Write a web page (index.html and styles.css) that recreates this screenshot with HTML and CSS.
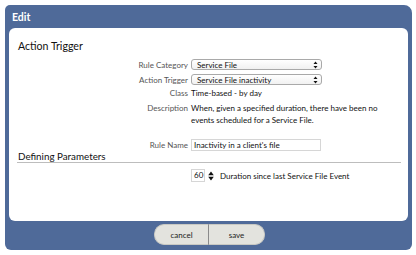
FILE: index.html
```html
<!DOCTYPE html>
<html>
<head>
<meta charset="utf-8">
<link rel="stylesheet" href="styles.css">
</head>
<body>
<div class="dialog">
  <div class="titlebar">Edit</div>
  <div class="card">
    <h2 class="section-title">Action Trigger</h2>
    <div class="form">
      <div class="row row-select first">
        <span class="label">Rule Category</span>
        <div class="select"><span>Service File</span>
          <svg class="updown" width="5" height="8" viewBox="0 0 5 8"><path d="M2.5 0.5 L4.5 3 L0.5 3 Z M2.5 7.5 L4.5 5 L0.5 5 Z" fill="#111"/></svg>
        </div>
      </div>
      <div class="row row-select second">
        <span class="label">Action Trigger</span>
        <div class="select"><span>Service File inactivity</span>
          <svg class="updown" width="5" height="8" viewBox="0 0 5 8"><path d="M2.5 0.5 L4.5 3 L0.5 3 Z M2.5 7.5 L4.5 5 L0.5 5 Z" fill="#111"/></svg>
        </div>
      </div>
      <div class="row row-text class-row">
        <span class="label">Class</span>
        <span class="value">Time-based - by day</span>
      </div>
      <div class="row row-text desc-row">
        <span class="label">Description</span>
        <span class="value desc">When, given a specified duration, there have been no events scheduled for a Service File.</span>
      </div>
      <div class="row row-input name-row">
        <span class="label">Rule Name</span>
        <div class="textbox">Inactivity in a client's file</div>
      </div>
    </div>
    <h2 class="section-title underlined">Defining Parameters</h2>
    <div class="form">
      <div class="row param-row">
        <span class="label"></span>
        <div class="param">
          <div class="numbox">60</div>
          <svg class="spinner" width="6" height="10" viewBox="0 0 6 10"><path d="M3 0.5 L5.8 4.2 L0.2 4.2 Z M3 9.5 L5.8 5.8 L0.2 5.8 Z" fill="#111"/></svg>
          <span class="param-text">Duration since last Service File Event</span>
        </div>
      </div>
    </div>
  </div>
  <div class="footer">
    <div class="btn-group">
      <button class="btn btn-left">cancel</button>
      <button class="btn btn-right">save</button>
    </div>
  </div>
</div>
</body>
</html>
```
FILE: styles.css
```css
html, body {
  margin: 0;
  padding: 0;
  background: #ffffff;
}
body {
  font-family: Lato, "Open Sans", sans-serif;
}
.dialog {
  margin: 5px 0 0 5px;
  width: 407px;
  height: 245px;
  background: #4f6a99;
  border-radius: 5px 8px 6px 6px;
  display: flex;
  flex-direction: column;
}
.titlebar {
  height: 23px;
  line-height: 24px;
  padding-left: 7px;
  color: #ffffff;
  font-weight: bold;
  font-size: 10.5px;
}
.card {
  margin: 0 4px;
  height: 193px;
  box-sizing: border-box;
  background: #ffffff;
  border-radius: 6px;
  padding: 11px 7px 0 9px;
}
.section-title {
  margin: 0;
  font-size: 10.6px;
  font-weight: normal;
  line-height: 14px;
  color: #111;
}
.section-title.underlined {
  margin-top: 0;
  font-size: 9.8px;
  line-height: 11px;
  border-bottom: 1px solid #bdbdbd;
  margin-left: -1px;
  padding-left: 1px;
}
.form {
  display: flex;
  flex-direction: column;
}
.row {
  display: grid;
  grid-template-columns: 170px 1fr;
  column-gap: 3px;
  align-items: center;
  font-size: 8px;
}
.label {
  text-align: right;
  color: #555;
}
.value {
  color: #111;
  line-height: 12px;
}
.desc {
  width: 200px;
}
.row-text {
  align-items: start;
  line-height: 12px;
}
.first { margin-top: 6px; }
.second { margin-top: 4px; }
.class-row { margin-top: 2px; }
.desc-row { margin-top: 3px; }
.name-row { margin-top: 13px; }
.select {
  width: 131px;
  height: 11px;
  box-sizing: border-box;
  border: 1px solid #a9a9a9;
  border-radius: 3px;
  background: linear-gradient(#ffffff, #f1f1f1);
  display: flex;
  align-items: center;
  justify-content: space-between;
  padding: 0 3px 0 5px;
  color: #111;
}
.updown {
  display: block;
}
.textbox {
  width: 130px;
  height: 12px;
  box-sizing: border-box;
  border: 1px solid #d6d6d6;
  padding-left: 2px;
  line-height: 10px;
  color: #111;
}
.param-row {
  margin-top: 6px;
}
.param {
  display: flex;
  align-items: center;
}
.numbox {
  width: 14px;
  height: 13px;
  box-sizing: border-box;
  border: 1px solid #d6d6d6;
  line-height: 11px;
  padding-left: 2px;
  color: #111;
}
.spinner {
  display: block;
  margin-left: 3px;
}
.param-text {
  margin-left: 6px;
  color: #111;
}
.footer {
  flex: 1;
  display: flex;
  justify-content: center;
  padding-top: 3px;
}
.btn-group {
  display: flex;
  height: 21px;
  margin-left: 2px;
}
.btn {
  margin: 0;
  height: 21px;
  border: 1px solid #c9c9c3;
  background: #e3e3de;
  font-family: Lato, sans-serif;
  font-size: 8px;
  color: #222;
  padding: 0;
}
.btn-left {
  width: 55px;
  border-radius: 10px 0 0 10px;
  border-right: 1px solid #8a8a8a;
}
.btn-right {
  width: 56px;
  border-radius: 0 10px 10px 0;
  border-left: none;
}
```
